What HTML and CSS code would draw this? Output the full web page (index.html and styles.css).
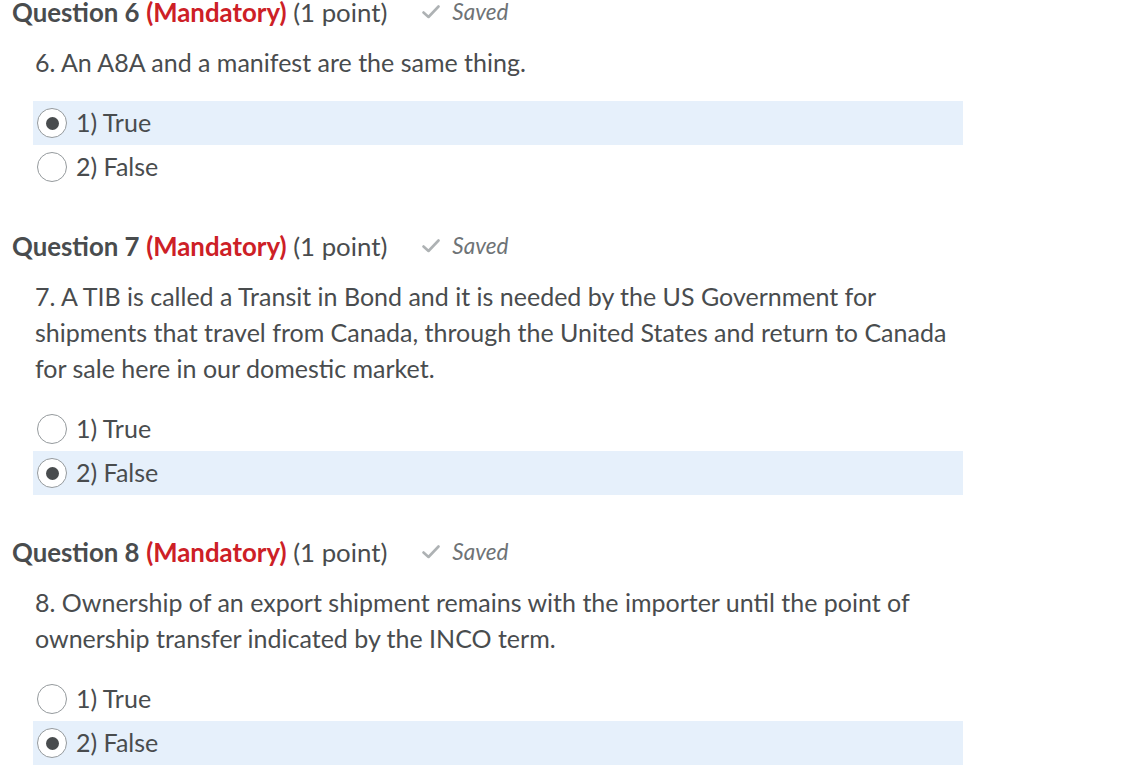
FILE: index.html
```html
<!DOCTYPE html>
<html>
<head>
<meta charset="utf-8">
<link rel="stylesheet" href="styles.css">
</head>
<body>
<div class="quiz">
  <section class="question">
    <h2 class="q-head"><span class="q-main"><span class="q-title">Question 6</span> <span class="q-mand">(Mandatory)</span> (1 point)</span><span class="q-saved"><svg class="check" viewBox="0 0 18 14" width="18" height="14"><path d="M1.5 7.5 L6.5 12 L16.5 1.5" fill="none" stroke="#aeb2b4" stroke-width="2.6" stroke-linecap="round" stroke-linejoin="round"/></svg><i>Saved</i></span></h2>
    <p class="q-text">6. An A8A and a manifest are the same thing.</p>
    <div class="options">
      <div class="opt selected"><span class="radio checked"></span><span class="opt-label">1) True</span></div>
      <div class="opt"><span class="radio"></span><span class="opt-label">2) False</span></div>
    </div>
  </section>
  <section class="question">
    <h2 class="q-head"><span class="q-main"><span class="q-title">Question 7</span> <span class="q-mand">(Mandatory)</span> (1 point)</span><span class="q-saved"><svg class="check" viewBox="0 0 18 14" width="18" height="14"><path d="M1.5 7.5 L6.5 12 L16.5 1.5" fill="none" stroke="#aeb2b4" stroke-width="2.6" stroke-linecap="round" stroke-linejoin="round"/></svg><i>Saved</i></span></h2>
    <p class="q-text">7. A TIB is called a Transit in Bond and it is needed by the US Government for shipments that travel from Canada, through the United States and return to Canada for sale here in our domestic market.</p>
    <div class="options">
      <div class="opt"><span class="radio"></span><span class="opt-label">1) True</span></div>
      <div class="opt selected"><span class="radio checked"></span><span class="opt-label">2) False</span></div>
    </div>
  </section>
  <section class="question">
    <h2 class="q-head"><span class="q-main"><span class="q-title">Question 8</span> <span class="q-mand">(Mandatory)</span> (1 point)</span><span class="q-saved"><svg class="check" viewBox="0 0 18 14" width="18" height="14"><path d="M1.5 7.5 L6.5 12 L16.5 1.5" fill="none" stroke="#aeb2b4" stroke-width="2.6" stroke-linecap="round" stroke-linejoin="round"/></svg><i>Saved</i></span></h2>
    <p class="q-text">8. Ownership of an export shipment remains with the importer until the point of ownership transfer indicated by the INCO term.</p>
    <div class="options">
      <div class="opt"><span class="radio"></span><span class="opt-label">1) True</span></div>
      <div class="opt selected"><span class="radio checked"></span><span class="opt-label">2) False</span></div>
    </div>
  </section>
</div>
</body>
</html>
```
FILE: styles.css
```css
html, body {
  margin: 0;
  padding: 0;
  background: #ffffff;
}
body {
  font-family: Lato, "Open Sans", sans-serif;
  color: #494c4e;
}
.quiz {
  padding: 0 0 0 12px;
  display: flex;
  flex-direction: column;
  gap: 45px;
}
.q-head {
  margin: 0;
  height: 24px;
  display: flex;
  align-items: center;
  font-weight: 400;
  white-space: nowrap;
}
.q-main {
  font-size: 25.8px;
  line-height: 24px;
}
.q-title { font-weight: 700; }
.q-mand { font-weight: 700; color: #cd2026; }
.q-saved {
  display: flex;
  align-items: center;
  margin-left: 35px;
  color: #6e7376;
  font-size: 22.5px;
  line-height: 24px;
  margin-top: -1px;
}
.q-saved .check { margin-right: 12px; }
.q-saved i { font-style: italic; }
.q-text {
  margin: 20px 0 0 23px;
  width: 930px;
  font-size: 25px;
  line-height: 36px;
}
.options {
  margin: 21px 0 0 21px;
  width: 930px;
}
.opt {
  height: 44px;
  display: flex;
  align-items: center;
  padding-left: 4px;
  font-size: 25px;
}
.opt-label { margin-top: -3px; }
.opt.selected { background: #e6f0fb; }
.radio {
  width: 28px;
  height: 28px;
  border: 1.6px solid #959a9d;
  border-radius: 50%;
  background: #fff;
  box-sizing: content-box;
  display: flex;
  align-items: center;
  justify-content: center;
  margin-right: 9px;
}
.radio.checked::after {
  content: "";
  width: 13px;
  height: 13px;
  border-radius: 50%;
  background: #494c4e;
}
```
